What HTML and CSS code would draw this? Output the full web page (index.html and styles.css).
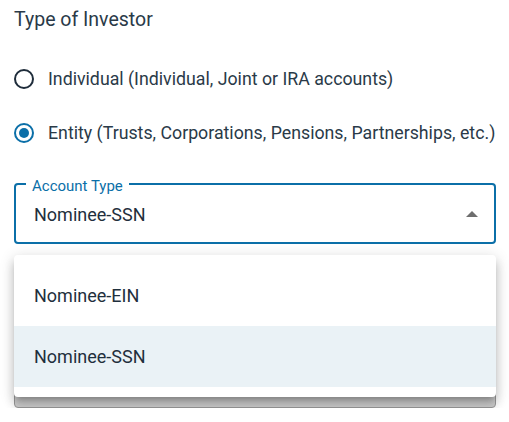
FILE: index.html
```html
<!DOCTYPE html>
<html lang="en">
<head>
<meta charset="utf-8">
<title>Type of Investor</title>
<link rel="stylesheet" href="styles.css">
</head>
<body>
<div class="page">
  <h2 class="title">Type of Investor</h2>
  <div class="radios">
    <label class="radio">
      <span class="radio-ring"></span>
      <span class="radio-text">Individual (Individual, Joint or IRA accounts)</span>
    </label>
    <label class="radio checked">
      <span class="radio-ring"><span class="radio-dot"></span></span>
      <span class="radio-text">Entity (Trusts, Corporations, Pensions, Partnerships, etc.)</span>
    </label>
  </div>
  <div class="select-wrap">
    <fieldset class="select">
      <legend class="select-legend">Account Type</legend>
      <span class="select-value">Nominee-SSN</span>
      <svg class="select-arrow" width="12" height="6" viewBox="0 0 12 6"><path d="M0 6 L6 0 L12 6 Z" fill="#6e6e6e"/></svg>
    </fieldset>
    <div class="field-below"></div>
    <ul class="menu">
      <li class="menu-item">Nominee-EIN</li>
      <li class="menu-item selected">Nominee-SSN</li>
    </ul>
  </div>
</div>
</body>
</html>
```
FILE: styles.css
```css
* { box-sizing: border-box; }
html, body { margin: 0; padding: 0; background: #ffffff; }
body {
  font-family: Roboto, "Noto Sans", "Liberation Sans", sans-serif;
  color: #263746;
}
.page {
  width: 509px;
  padding: 8px 13px 0 14px;
}
.title {
  margin: 0;
  font-size: 19.5px;
  font-weight: 400;
  line-height: 24px;
  color: #2a3a48;
}
.radios {
  display: flex;
  flex-direction: column;
  gap: 14px;
  margin-top: 27px;
}
.radio {
  display: flex;
  align-items: center;
  gap: 14px;
  height: 40px;
  font-size: 17.75px;
  color: #2a3a48;
}
.radio-ring {
  width: 20px;
  height: 20px;
  border: 2px solid #1f2d3b;
  border-radius: 50%;
  display: flex;
  align-items: center;
  justify-content: center;
  flex: none;
}
.checked .radio-ring { border-color: #0b6fa8; }
.radio-dot {
  width: 10px;
  height: 10px;
  border-radius: 50%;
  background: #0b6fa8;
}
.select-wrap {
  position: relative;
  margin-top: 30px;
}
.select {
  margin: 0;
  height: 61px;
  border: 2px solid #0b6fa8;
  border-radius: 4px;
  padding: 0 16px 0 18px;
  display: flex;
  align-items: center;
  justify-content: space-between;
  position: relative;
}
.select-legend {
  font-size: 15px;
  color: #0b6fa8;
  padding: 0 6px;
  line-height: 15px;
  position: absolute;
  top: -6px;
  left: 10px;
  background: #fff;
}
.select-value {
  font-size: 18px;
  color: #1f2f3d;
  margin-top: 2px;
}
.select-arrow { display: block; margin-top: 0; }
.field-below {
  height: 60px;
  margin-top: 104px;
  border: 1px solid #9a9a9a;
  border-radius: 4px;
  background: #d0d0d0;
}
.menu {
  position: absolute;
  top: 72px;
  left: 0;
  right: 0;
  margin: 0;
  padding: 10px 0;
  list-style: none;
  background: #fff;
  border-radius: 4px;
  box-shadow: 0 5px 5px -3px rgba(0,0,0,0.2), 0 8px 10px 1px rgba(0,0,0,0.14), 0 3px 14px 2px rgba(0,0,0,0.12);
}
.menu-item {
  height: 61px;
  display: flex;
  align-items: center;
  padding-left: 20px;
  font-size: 18px;
  color: #1f2f3d;
}
.menu-item.selected { background: #eaf2f6; }
```
